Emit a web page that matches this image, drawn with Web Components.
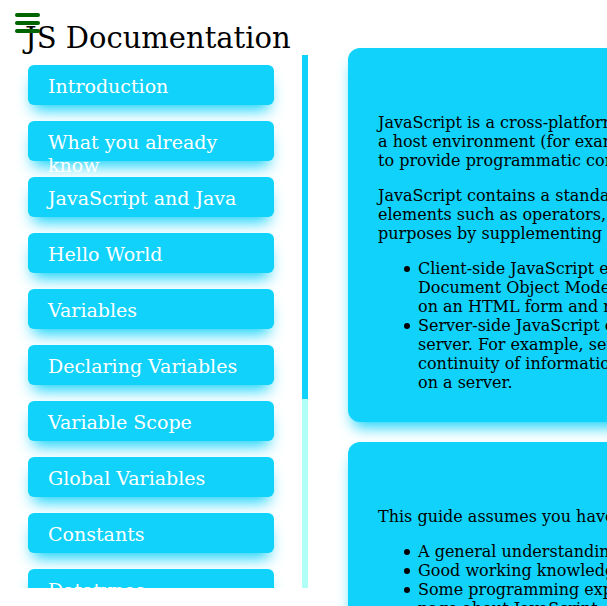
<!DOCTYPE html>
<html lang="en">
<head>
<meta charset="utf-8">
<title>JS Documentation</title>
<style>
  html, body { margin: 0; height: 100%; }
  body { background: #fff; color: #000; font: 16px/19px "DejaVu Serif", serif; overflow: hidden; }
</style>
</head>
<body>
<docs-page>
  <menu-toggle slot="toggle"></menu-toggle>
  <docs-nav slot="nav" heading="JS Documentation">
    <nav-item href="#introduction">Introduction</nav-item>
    <nav-item href="#known">What you already know</nav-item>
    <nav-item href="#java">JavaScript and Java</nav-item>
    <nav-item href="#hello">Hello World</nav-item>
    <nav-item href="#variables">Variables</nav-item>
    <nav-item href="#declaring">Declaring Variables</nav-item>
    <nav-item href="#scope">Variable Scope</nav-item>
    <nav-item href="#global">Global Variables</nav-item>
    <nav-item href="#constants">Constants</nav-item>
    <nav-item href="#datatypes">Datatypes</nav-item>
  </docs-nav>
  <doc-section id="introduction">
    <doc-text>JavaScript is a cross-platform,<br>a host environment (for example,<br>to provide programmatic control</doc-text>
    <doc-text>JavaScript contains a standard<br>elements such as operators,<br>purposes by supplementing it</doc-text>
    <doc-list>
      <doc-point>Client-side JavaScript extends<br>Document Object Model<br>on an HTML form and respond</doc-point>
      <doc-point>Server-side JavaScript extends<br>server. For example, server-side<br>continuity of information<br>on a server.</doc-point>
    </doc-list>
  </doc-section>
  <doc-section id="known">
    <doc-text>This guide assumes you have</doc-text>
    <doc-list>
      <doc-point>A general understanding</doc-point>
      <doc-point>Good working knowledge</doc-point>
      <doc-point>Some programming experience<br>page about JavaScript.</doc-point>
    </doc-list>
  </doc-section>
</docs-page>
<script>
function define(name, markup, setup) {
  customElements.define(name, class extends HTMLElement {
    constructor() {
      super();
      this.attachShadow({ mode: "open" }).innerHTML = markup;
    }
    connectedCallback() {
      if (setup) setup(this, this.shadowRoot);
    }
  });
}

define("docs-page", `
  <style>
    :host { display: grid; grid-template-columns: 308px minmax(0, 1fr); column-gap: 40px; height: 100vh; overflow: hidden; position: relative; }
    main { display: flex; flex-direction: column; gap: 20px; padding-top: 48px; min-width: 0; }
    .toggle { position: absolute; top: 13px; left: 15px; z-index: 1; }
  </style>
  <div class="toggle"><slot name="toggle"></slot></div>
  <slot name="nav"></slot>
  <main><slot></slot></main>`);

define("menu-toggle", `
  <style>
    :host { display: block; }
    button { display: flex; flex-direction: column; gap: 4px; width: 25px; padding: 0; border: 0; background: none; cursor: pointer; }
    span { height: 4px; width: 100%; border-radius: 2px; background: #006400; }
  </style>
  <button type="button" aria-label="Menu"><span></span><span></span><span></span></button>`);

define("docs-nav", `
  <style>
    :host { display: flex; flex-direction: column; box-sizing: border-box; height: 588px; max-height: 100vh; padding-top: 20px; }
    h1 { margin: 0 0 0 25px; padding-top: 1px; font-size: 29px; line-height: 34px; font-weight: 400; white-space: nowrap; }
    .scroller { display: flex; flex: 1; min-height: 0; }
    nav { display: flex; flex-direction: column; flex: 1; gap: 16px; padding: 10px 28px 0; overflow: hidden; }
    .track { width: 6px; background: #b2fff8; }
    .thumb { height: 64.6%; background: #10d2fa; }
  </style>
  <h1></h1>
  <div class="scroller">
    <nav><slot></slot></nav>
    <div class="track"><div class="thumb"></div></div>
  </div>`, (el, root) => { root.querySelector("h1").textContent = el.getAttribute("heading"); });

define("nav-item", `
  <style>
    :host { display: block; flex: none; position: relative; }
    a { display: block; box-sizing: border-box; height: 40px; padding: 10px 20px; border-radius: 6px; background: #10d2fa; box-shadow: 0 10px 15px -5px #10d2fa; color: #fff; font-size: 19px; line-height: 23px; text-decoration: none; }
  </style>
  <a><slot></slot></a>`, (el, root) => { root.querySelector("a").href = el.getAttribute("href"); });

define("doc-section", `
  <style>
    :host { display: block; flex: none; margin-right: -30px; padding: 65px 30px 30px; border-radius: 12px; background: #10d2fa; box-shadow: 0 10px 15px -5px #10d2fa; white-space: nowrap; }
    section { display: flex; flex-direction: column; gap: 16px; }
  </style>
  <section><slot></slot></section>`);

define("doc-text", `
  <style>:host { display: block; } p { margin: 0; }</style>
  <p><slot></slot></p>`);

define("doc-list", `
  <style>:host { display: block; padding-left: 26px; }</style>
  <slot></slot>`, el => el.setAttribute("role", "list"));

define("doc-point", `
  <style>
    :host { display: flex; gap: 8px; }
    i { flex: none; width: 6px; height: 6px; margin-top: 7px; border-radius: 50%; background: currentColor; }
  </style>
  <i></i><div><slot></slot></div>`, el => el.setAttribute("role", "listitem"));
</script>
</body>
</html>
